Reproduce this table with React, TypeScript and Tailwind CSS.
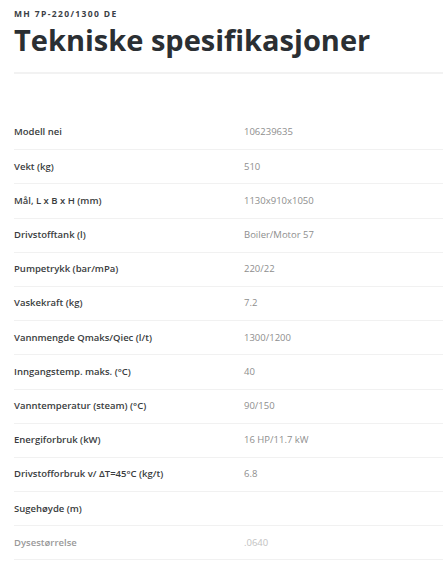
const specs: [string, string][] = [
  ['Modell nei', '106239635'],
  ['Vekt (kg)', '510'],
  ['Mål, L x B x H (mm)', '1130x910x1050'],
  ['Drivstofftank (l)', 'Boiler/Motor 57'],
  ['Pumpetrykk (bar/mPa)', '220/22'],
  ['Vaskekraft (kg)', '7.2'],
  ['Vannmengde Qmaks/Qiec (l/t)', '1300/1200'],
  ['Inngangstemp. maks. (°C)', '40'],
  ['Vanntemperatur (steam) (°C)', '90/150'],
  ['Energiforbruk (kW)', '16 HP/11.7 kW'],
  ['Drivstofforbruk v/ ΔT=45°C (kg/t)', '6.8'],
  ['Sugehøyde (m)', ''],
  ['Dysestørrelse', '.0640'],
];

export default function App() {
  return (
    <div className="min-h-[580px] w-[443px] overflow-hidden bg-white pl-[14px] font-['Open_Sans',sans-serif]">
      <div className="pt-[8px]">
        <p className="text-[8.5px] font-bold leading-[12px] tracking-[0.16em] text-[#3b4046]">MH 7P-220/1300 DE</p>
        <h1 className="mt-[1px] text-[29px] font-bold leading-[38px] text-[#2b2f33]">Tekniske spesifikasjoner</h1>
      </div>
      <div className="mt-[13px] h-[2px] bg-[#f2f2f2]" />

      <div className="mt-[42px]">
        {specs.map(([label, value], i) => {
          const last = i === specs.length - 1;
          return (
            <div key={label} className="flex h-[34.2px] items-center border-b border-[#f1f1f1]">
              <span className={`w-[230px] text-[9.5px] font-semibold ${last ? 'text-[#9a9a9a]' : 'text-[#3a3d40]'}`}>
                {label}
              </span>
              <span className={`text-[9.5px] ${last ? 'text-[#c2c2c2]' : 'text-[#8e8e8e]'}`}>{value}</span>
            </div>
          );
        })}
      </div>
    </div>
  );
}
